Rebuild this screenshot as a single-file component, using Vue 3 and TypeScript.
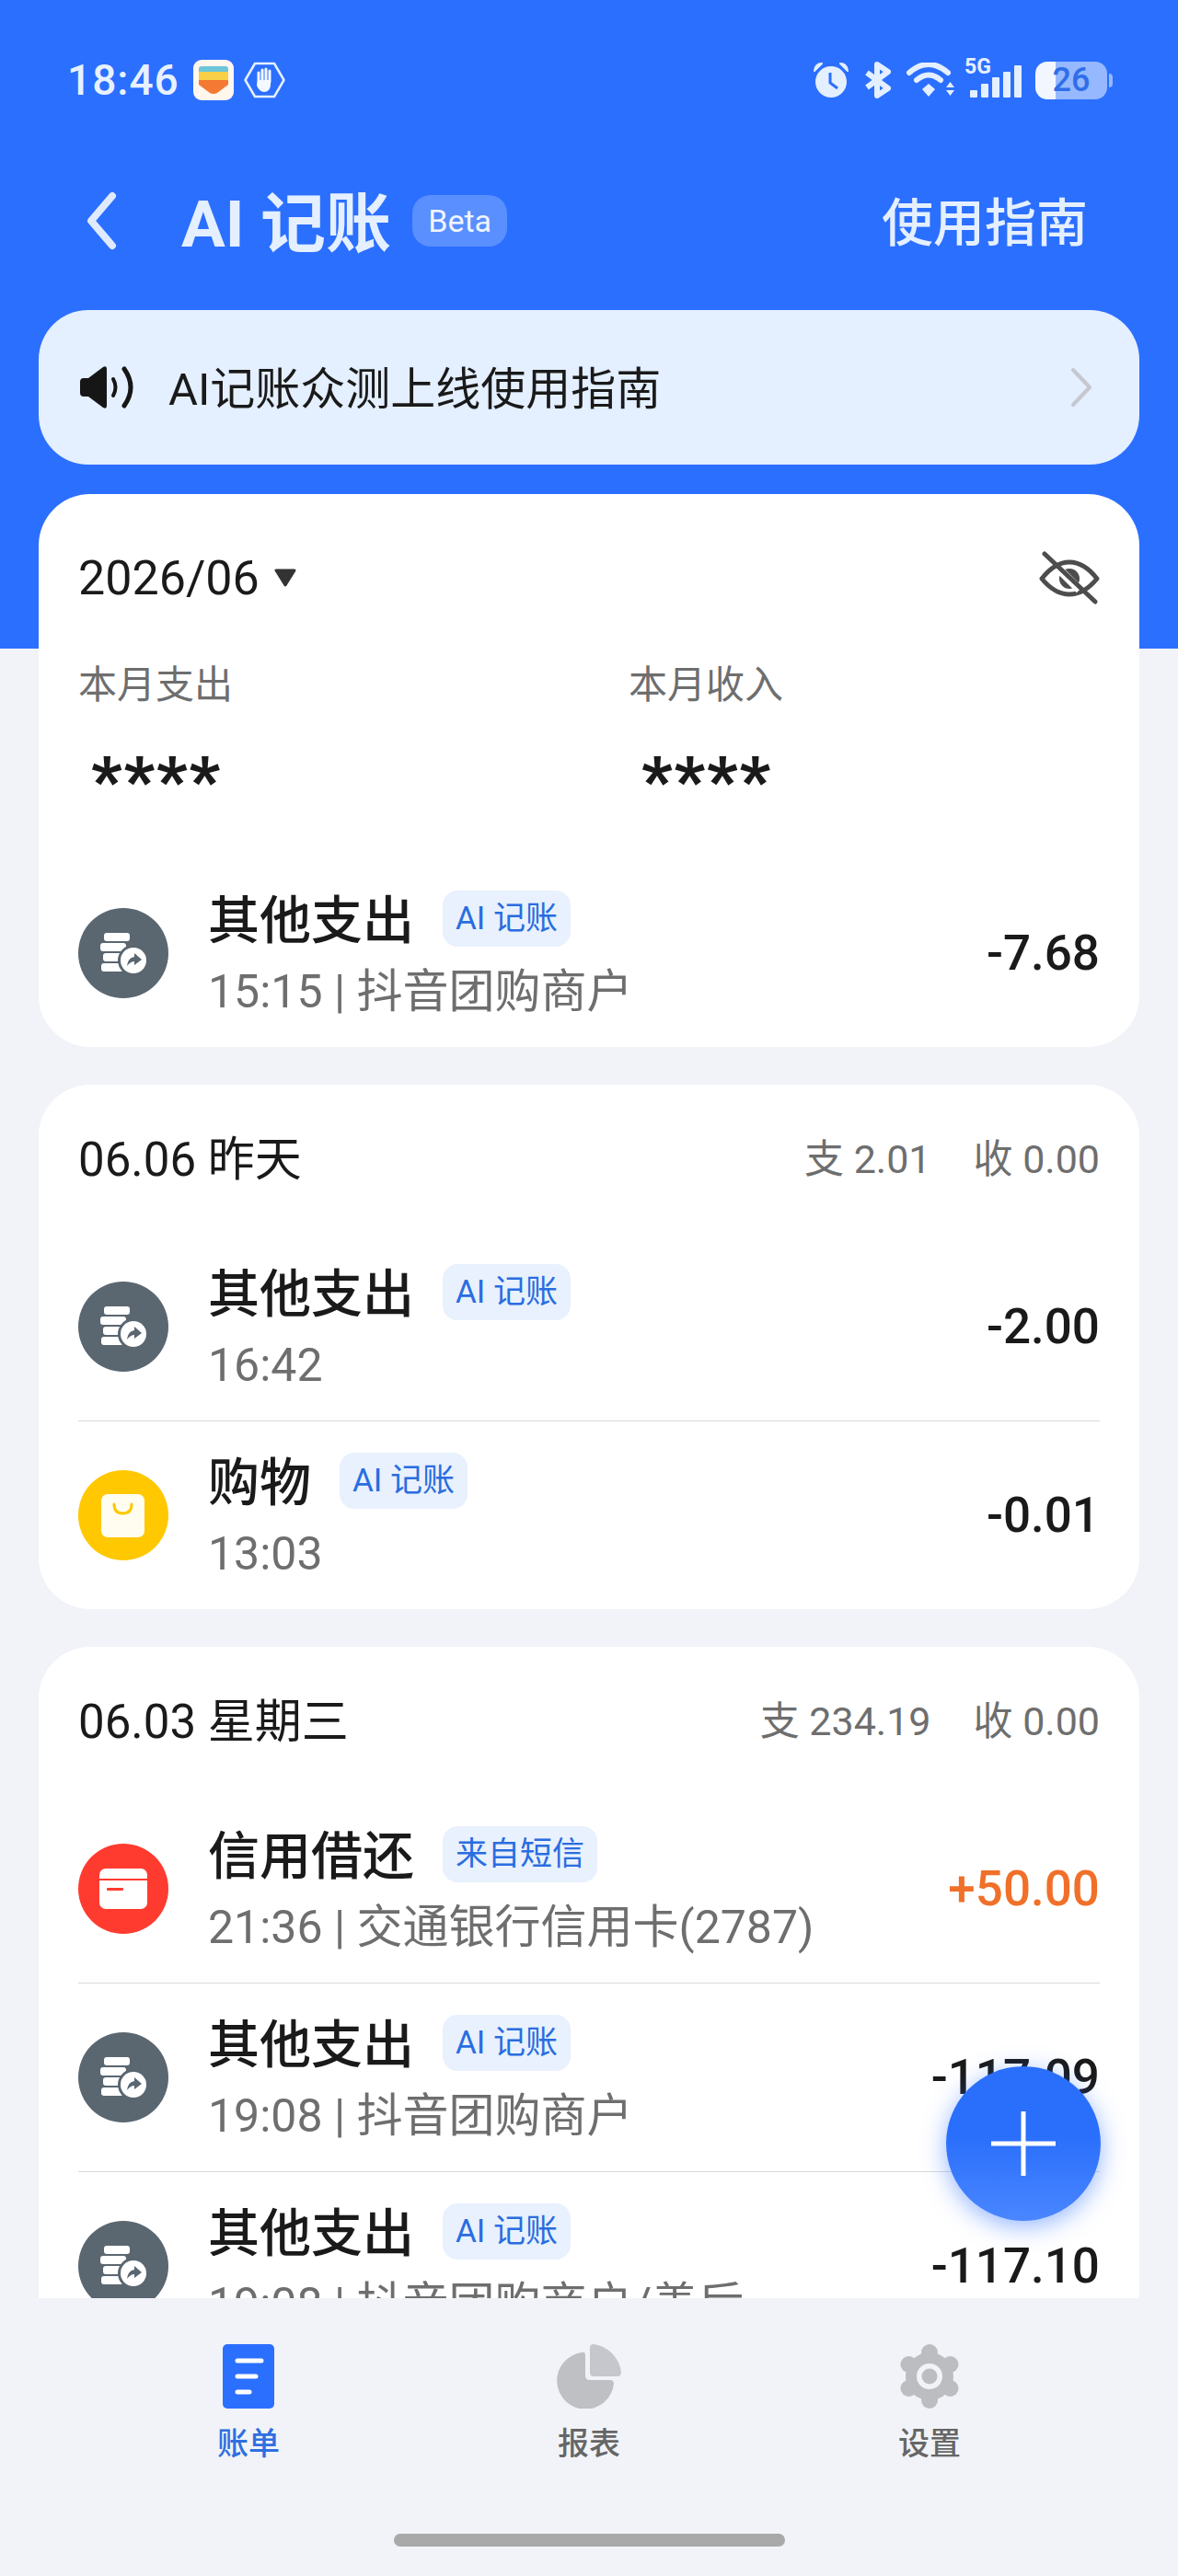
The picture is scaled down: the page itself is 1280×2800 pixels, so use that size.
<script setup lang="ts">
type Entry = {
  id: number
  kind: 'other' | 'shop' | 'card'
  title: string
  tag: string
  sub: string
  amount: string
  income?: boolean
}

type DaySection = {
  date: string
  out: string
  inc: string
  rows: Entry[]
}

const firstRow: Entry = {
  id: 1,
  kind: 'other',
  title: '其他支出',
  tag: 'AI 记账',
  sub: '15:15 | 抖音团购商户',
  amount: '-7.68',
}

const days: DaySection[] = [
  {
    date: '06.06 昨天',
    out: '支 2.01',
    inc: '收 0.00',
    rows: [
      { id: 2, kind: 'other', title: '其他支出', tag: 'AI 记账', sub: '16:42', amount: '-2.00' },
      { id: 3, kind: 'shop', title: '购物', tag: 'AI 记账', sub: '13:03', amount: '-0.01' },
    ],
  },
  {
    date: '06.03 星期三',
    out: '支 234.19',
    inc: '收 0.00',
    rows: [
      { id: 4, kind: 'card', title: '信用借还', tag: '来自短信', sub: '21:36 | 交通银行信用卡(2787)', amount: '+50.00', income: true },
      { id: 5, kind: 'other', title: '其他支出', tag: 'AI 记账', sub: '19:08 | 抖音团购商户', amount: '-117.09' },
      { id: 6, kind: 'other', title: '其他支出', tag: 'AI 记账', sub: '19:08 | 抖音团购商户/善后', amount: '-117.10' },
    ],
  },
]

const sections = [{ rows: [firstRow] }, ...days]
const lobes = [
  [33, 9],
  [55.5, 22],
  [55.5, 48],
  [33, 61],
  [10.5, 48],
  [10.5, 22],
]
</script>

<template>
  <div class="page">
    <div class="status">
      <div class="status-side">
        <span class="time">18:46</span>
        <svg class="wallet" width="44" height="44" viewBox="0 0 44 44">
          <rect width="44" height="44" rx="9" fill="#fff6ee" />
          <rect x="6" y="7" width="32" height="8" rx="3" fill="#6cc6d8" />
          <rect x="6" y="13" width="32" height="9" fill="#f7d048" />
          <path d="M6 22H38V27L26 36Q22 38 18 36L6 27Z" fill="#f47a34" />
        </svg>
        <svg class="hand" width="45" height="40" viewBox="0 0 45 40">
          <path d="M12 2H33L43.500 20L33 38H12L1.500 20Z" fill="none" stroke="#e4efff" stroke-width="2.500" stroke-linejoin="round" />
          <path d="M16 12V24M20 9V21M24 8V21M28 10V22" stroke="#f4f8ff" stroke-width="3" stroke-linecap="round" />
          <path d="M15 20H29V26Q28 33 22 33Q17 33 14 26Z" fill="#f4f8ff" />
        </svg>
      </div>
      <div class="status-side right">
        <svg width="40" height="40" viewBox="0 0 40 40">
          <circle cx="20" cy="22" r="17" fill="#e4efff" />
          <path d="M2 10Q3 2 10 2ZM38 10Q37 2 30 2Z" fill="#e4efff" stroke="#e4efff" stroke-width="2" stroke-linejoin="round" />
          <path d="M19 12V23L27 29" fill="none" stroke="#2b6fff" stroke-width="3" />
        </svg>
        <svg width="32" height="40" viewBox="0 0 32 40">
          <path d="M4 12L27 29L15 37V3L27 11L4 28" fill="none" stroke="#e4efff" stroke-width="6" stroke-linejoin="round" />
        </svg>
        <svg width="54" height="38" viewBox="0 0 54 38">
          <path d="M3 11Q24 -7 45 11" fill="none" stroke="#e4efff" stroke-width="6" stroke-linecap="round" />
          <path d="M11 19Q24 8 37 19" fill="none" stroke="#e4efff" stroke-width="6" stroke-linecap="round" />
          <path d="M17 30L24 24L31 30L24 38Z" fill="#e4efff" transform="translate(0 -1)" />
          <path d="M43 27L47.500 21L52 27ZM43 30L47.500 36L52 30Z" fill="#e4efff" />
        </svg>
        <div class="signal">
          <span class="five-g">5G</span>
          <svg width="56" height="35" viewBox="0 0 56 35">
            <rect y="27" width="8" height="8" rx="1" fill="#e4efff" />
            <rect x="12" y="20" width="8" height="15" rx="1" fill="#e4efff" />
            <rect x="24" y="13" width="8" height="22" rx="1" fill="#e4efff" />
            <rect x="36" y="7" width="8" height="28" rx="1" fill="#e4efff" />
            <rect x="48" width="8" height="35" rx="1" fill="#e4efff" />
          </svg>
        </div>
        <div class="battery"><span>26</span></div>
      </div>
    </div>

    <div class="topbar">
      <svg class="back" width="34" height="64" viewBox="0 0 34 64">
        <path d="M29 5L6 32L29 59" fill="none" stroke="#dfeaff" stroke-width="8" stroke-linecap="round" stroke-linejoin="round" />
      </svg>
      <span class="title">AI 记账</span>
      <span class="beta">Beta</span>
      <span class="guide">使用指南</span>
    </div>

    <div class="notice">
      <svg width="64" height="48" viewBox="0 0 64 48">
        <path d="M0 18Q0 14 4 14H9L25 2Q29 0 29 4V44Q29 48 25 46L9 34H4Q0 34 0 30Z" fill="#161616" />
        <path d="M36 15Q41 24 36 33" fill="none" stroke="#161616" stroke-width="4" stroke-linecap="round" />
        <path d="M48 4Q62 24 48 44" fill="none" stroke="#161616" stroke-width="5" stroke-linecap="round" />
      </svg>
      <span class="notice-text">AI记账众测上线使用指南</span>
      <svg class="notice-arrow" width="24" height="44" viewBox="0 0 24 44">
        <path d="M3 3L21 22L3 41" fill="none" stroke="#c5c8cf" stroke-width="4" stroke-linecap="round" stroke-linejoin="round" />
      </svg>
    </div>

    <div class="scroll">
      <section v-for="(sec, i) in sections" :key="i" class="card">
        <div v-if="i === 0" class="summary">
          <div class="summary-top">
            <span class="month">2026/06</span>
            <svg class="caret" width="26" height="20" viewBox="0 0 26 20">
              <path d="M3 2H23L13 18Z" fill="#333" stroke="#333" stroke-width="3" stroke-linejoin="round" />
            </svg>
            <svg class="eye" width="66" height="58" viewBox="0 0 66 58">
              <path d="M3 30Q17 12 33 12Q49 12 63 30Q49 47 33 47Q17 47 3 30Z" fill="none" stroke="#4d4d4d" stroke-width="5" stroke-linejoin="round" />
              <circle cx="33" cy="30" r="11" fill="#4d4d4d" />
              <path d="M22 20L44 42" stroke="#fff" stroke-width="9" />
              <path d="M6 3L61 55" stroke="#4d4d4d" stroke-width="5" stroke-linecap="round" />
            </svg>
          </div>
          <div class="totals">
            <div>
              <div class="total-label">本月支出</div>
              <div class="stars">****</div>
            </div>
            <div>
              <div class="total-label">本月收入</div>
              <div class="stars">****</div>
            </div>
          </div>
        </div>

        <div v-if="'date' in sec" class="day-head">
          <span class="day">{{ sec.date }}</span>
          <span class="day-sum"><span>{{ sec.out }}</span><span>{{ sec.inc }}</span></span>
        </div>

        <div v-for="row in sec.rows" :key="row.id" class="row">
          <svg v-if="row.kind === 'other'" width="98" height="98" viewBox="0 0 98 98">
            <circle cx="49" cy="49" r="49" fill="#5a6670" />
            <rect x="28" y="27" width="28" height="9" rx="3" fill="#fff" />
            <rect x="24" y="38" width="28" height="9" rx="3" fill="#fff" />
            <rect x="27" y="49" width="22" height="9" rx="3" fill="#fff" />
            <rect x="25" y="60" width="24" height="9" rx="3" fill="#fff" />
            <circle cx="60" cy="57" r="17" fill="#5a6670" />
            <circle cx="60" cy="57" r="14" fill="#fff" />
            <path d="M53 63Q54 54 61 53V49L69 56L61 62V58Q57 58 53 63Z" fill="#5a6670" />
          </svg>
          <svg v-else-if="row.kind === 'shop'" width="98" height="98" viewBox="0 0 98 98">
            <circle cx="49" cy="49" r="49" fill="#ffc800" />
            <rect x="25" y="26" width="47" height="47" rx="7" fill="#fffdf0" />
            <path d="M39 37Q39 47 48.500 47Q58 47 58 37" fill="none" stroke="#ffc800" stroke-width="3" stroke-linecap="round" />
          </svg>
          <svg v-else width="98" height="98" viewBox="0 0 98 98">
            <circle cx="49" cy="49" r="49" fill="#ff3b30" />
            <rect x="23" y="27" width="52" height="44" rx="7" fill="#fff" />
            <rect x="23" y="38" width="52" height="2" fill="#ff3b30" />
            <rect x="31" y="48" width="18" height="3" rx="1" fill="#ff3b30" />
          </svg>
          <div class="row-text">
            <div class="row-title">
              <span class="name">{{ row.title }}</span>
              <span class="tag">{{ row.tag }}</span>
            </div>
            <div class="sub">{{ row.sub }}</div>
          </div>
          <span class="amount" :class="{ income: row.income }">{{ row.amount }}</span>
        </div>
      </section>
    </div>

    <button class="fab" type="button" aria-label="add">
      <svg width="70" height="70" viewBox="0 0 70 70">
        <path d="M35 0V70M0 35H70" stroke="#fff" stroke-width="5" />
      </svg>
    </button>

    <nav class="tabbar">
      <div class="tabs">
        <div class="tab active">
          <svg width="56" height="70" viewBox="0 0 56 70">
            <rect width="56" height="70" rx="5" fill="#2b6fff" />
            <path d="M16 18H42M16 35H36M16 52H29" stroke="#fff" stroke-width="5" stroke-linecap="round" />
          </svg>
          <span>账单</span>
        </div>
        <div class="tab">
          <svg width="70" height="70" viewBox="0 0 70 70">
            <path d="M27 9Q31 8 31 12V34Q31 39 36 39H58Q62 39 62 43A31 31 0 1 1 27 9Z" fill="#bfc0c4" />
            <path d="M36 4Q36 0 40 0A35 35 0 0 1 70 30Q70 35 66 35H40Q36 35 36 31Z" fill="#c6c7cc" />
          </svg>
          <span>报表</span>
        </div>
        <div class="tab">
          <svg width="66" height="70" viewBox="0 0 66 70">
            <circle cx="33" cy="35" r="26" fill="#bcbdc1" />
            <circle v-for="(p, i) in lobes" :key="i" :cx="p[0]" :cy="p[1]" r="9" fill="#bcbdc1" />
            <circle cx="33" cy="35" r="14" fill="#f1f3f8" />
            <circle cx="33" cy="35" r="8.500" fill="#bcbdc1" />
          </svg>
          <span>设置</span>
        </div>
      </div>
      <div class="home-bar"></div>
    </nav>
  </div>
</template>

<style>
body {
  margin: 0;
  background: #f1f3f8;
}
</style>

<style scoped>
.page {
  position: relative;
  width: 1280px;
  height: 2800px;
  display: flex;
  flex-direction: column;
  overflow: hidden;
  background: linear-gradient(#2b6fff 705px, #f1f3f8 705px);
  font-family: Roboto, "Noto Sans CJK SC", sans-serif;
  color: #1a1a1a;
}
.status {
  height: 174px;
  flex: none;
  padding: 0 72px 0 73px;
  display: flex;
  justify-content: space-between;
  align-items: center;
}
.status-side {
  display: flex;
  align-items: center;
}
.status-side.right {
  gap: 15px;
}
.time {
  font-size: 46px;
  font-weight: 500;
  letter-spacing: 1px;
  color: #e8f1ff;
  margin-right: 15px;
}
.hand {
  margin-left: 11px;
}
.signal {
  position: relative;
  height: 35px;
  margin-top: 2px;
}
.five-g {
  position: absolute;
  left: -6px;
  top: -10px;
  font-size: 23px;
  line-height: 23px;
  font-weight: 700;
  color: #e4efff;
}
.battery {
  position: relative;
  width: 78px;
  height: 41px;
  margin-right: 5px;
  border-radius: 13px;
  background: linear-gradient(90deg, #f2f7ff 28%, #96b8ff 28%);
  display: flex;
  align-items: center;
  justify-content: center;
  font-size: 36px;
  font-weight: 500;
  color: #2f6ee8;
}
.battery::after {
  content: "";
  position: absolute;
  right: -6px;
  top: 13px;
  width: 4px;
  height: 15px;
  border-radius: 0 8px 8px 0;
  background: #96b8ff;
}
.topbar {
  height: 132px;
  flex: none;
  padding-left: 93px;
  display: flex;
  align-items: center;
  color: #e4efff;
}
.title {
  margin-left: 70px;
  padding-bottom: 6px;
  font-size: 71px;
  font-weight: 700;
  white-space: nowrap;
}
.beta {
  margin-left: 23px;
  width: 103px;
  height: 56px;
  border-radius: 20px;
  background: #5a8fff;
  font-size: 34px;
  line-height: 56px;
  text-align: center;
  color: #f0f5ff;
}
.guide {
  margin-left: auto;
  margin-right: 98px;
  padding-bottom: 6px;
  font-size: 56px;
  font-weight: 500;
}
.notice {
  flex: none;
  height: 168px;
  margin: 31px 42px 0;
  padding: 0 51px 0 45px;
  border-radius: 54px;
  background: #e4efff;
  display: flex;
  align-items: center;
}
.notice-text {
  margin-left: 32px;
  padding-bottom: 6px;
  font-size: 49px;
}
.notice-arrow {
  margin-left: auto;
}
.scroll {
  flex: 1;
  min-height: 0;
  overflow: hidden;
  padding: 32px 42px 0;
  display: flex;
  flex-direction: column;
  gap: 41px;
}
.card {
  flex: none;
  padding: 0 43px;
  background: #fff;
  border-radius: 56px;
}
.summary {
  height: 396px;
}
.summary-top {
  height: 178px;
  display: flex;
  align-items: center;
  padding-top: 4px;
  box-sizing: border-box;
}
.month {
  font-size: 52px;
}
.caret {
  margin-left: 15px;
}
.eye {
  margin-left: auto;
}
.totals {
  display: grid;
  grid-template-columns: 598px 1fr;
}
.total-label {
  font-size: 42px;
  line-height: 60px;
  color: #6e6e6e;
}
.stars {
  margin-top: 40px;
  padding-left: 14px;
  font-size: 72px;
  line-height: 70px;
  height: 70px;
  font-weight: 900;
  letter-spacing: 2px;
}
.day-head {
  height: 160px;
  display: flex;
  align-items: center;
  justify-content: space-between;
}
.day {
  padding-bottom: 6px;
  font-size: 51px;
}
.day-sum {
  display: flex;
  gap: 46px;
  padding-bottom: 6px;
  font-size: 43px;
  color: #6e6e6e;
}
.row {
  height: 205px;
  box-sizing: border-box;
  display: flex;
  align-items: center;
  border-top: 1px solid #d9d9d9;
}
.summary + .row,
.day-head + .row {
  border-top-color: transparent;
}
.row-text {
  margin-left: 43px;
  padding-top: 3px;
  display: flex;
  flex-direction: column;
  gap: 19px;
}
.row-title {
  display: flex;
  align-items: center;
  height: 61px;
}
.name {
  padding-bottom: 6px;
  font-size: 56px;
  font-weight: 500;
}
.tag {
  margin-left: 31px;
  height: 61px;
  padding: 0 14px;
  border-radius: 16px;
  background: #e8f1fd;
  font-size: 35px;
  line-height: 61px;
  color: #2a6de0;
  white-space: nowrap;
}
.sub {
  font-size: 50px;
  line-height: 60px;
  color: #6e6e6e;
  white-space: nowrap;
}
.amount {
  margin-left: auto;
  font-size: 53px;
  font-weight: 500;
}
.amount.income {
  color: #f0702a;
}
.fab {
  position: absolute;
  right: 84px;
  bottom: 386px;
  width: 168px;
  height: 168px;
  padding: 0;
  border: 0;
  border-radius: 50%;
  background: linear-gradient(#2a6ffb 45%, #4a86ff);
  box-shadow: 0 6px 26px rgba(43, 111, 255, 0.5);
  display: flex;
  align-items: center;
  justify-content: center;
}
.tabbar {
  flex: none;
  height: 302px;
  box-sizing: border-box;
  padding-top: 50px;
  background: #f1f3f8;
}
.tabs {
  display: grid;
  grid-template-columns: repeat(3, 370px);
  padding: 0 85px;
}
.tab {
  display: flex;
  flex-direction: column;
  align-items: center;
  gap: 20px;
  font-size: 34px;
  line-height: 36px;
  font-weight: 500;
  color: #666;
}
.tab.active {
  color: #2f6fe0;
}
.home-bar {
  width: 425px;
  height: 14px;
  margin: 80px auto 0;
  border-radius: 7px;
  background: #a9a9a9;
}
</style>
